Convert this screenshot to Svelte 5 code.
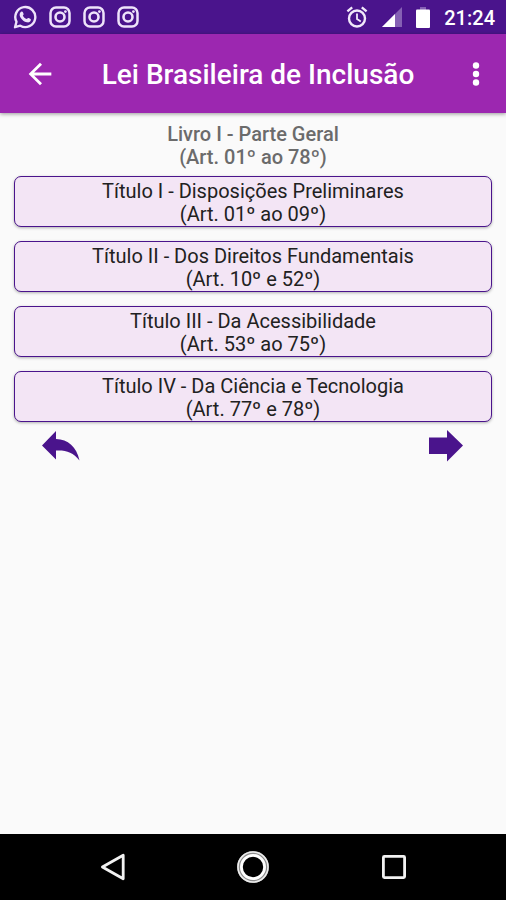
<script lang="ts">
	interface Title {
		name: string;
		articles: string;
	}

	let titles: Title[] = [
		{ name: "Título I - Disposições Preliminares", articles: "(Art. 01º ao 09º)" },
		{ name: "Título II - Dos Direitos Fundamentais", articles: "(Art. 10º e 52º)" },
		{ name: "Título III - Da Acessibilidade", articles: "(Art. 53º ao 75º)" },
		{ name: "Título IV - Da Ciência e Tecnologia", articles: "(Art. 77º e 78º)" }
	];

	let notifications: number[] = [1, 2, 3];
</script>

<div class="screen">
	<div class="status-bar">
		<div class="status-left">
			<svg width="24" height="24" viewBox="0 0 24 24" fill="none">
				<path d="M2 22.2 L3.5 16.8 A10 10 0 1 1 7.3 20.7 Z" stroke="#eee3fa" stroke-width="2.4" stroke-linejoin="round" />
				<path d="M8.6 6.6 C9.4 6.2 9.8 6.8 10.6 9 C10.8 9.7 10.2 10.1 9.8 10.6 C10.7 12.3 11.9 13.4 13.8 14.1 C14.4 13.6 14.8 12.7 15.5 13 C17.6 14 18 14.2 17.9 14.8 C17.6 17 15.7 17.7 14 17.3 C10.4 16.4 7.5 13.5 6.7 10.4 C6.4 8.8 7.3 7.2 8.6 6.6 Z" fill="#eee3fa" />
			</svg>
			{#each notifications as notification (notification)}
				<svg width="22" height="22" viewBox="0 0 22 22" fill="none" stroke="#eee3fa">
					<rect x="1.5" y="1.5" width="19" height="19" rx="5.5" stroke-width="2.5" />
					<circle cx="11" cy="11" r="4.5" stroke-width="2.6" />
					<circle cx="16.4" cy="5.6" r="1.4" fill="#eee3fa" stroke="none" />
				</svg>
			{/each}
		</div>
		<div class="status-right">
			<svg width="22" height="22" viewBox="0 0 22 22" fill="none" stroke="#f1e9fa" stroke-width="2.4">
				<circle cx="11" cy="12.5" r="8" />
				<path d="M1.4 5.4 L6.2 1.4 M20.6 5.4 L15.8 1.4" />
				<path d="M11 7.5 V13 L14.8 15.4" stroke-width="1.8" />
			</svg>
			<svg width="20" height="20" viewBox="0 0 20 20">
				<path d="M0 20 L20 0 V20 Z" fill="#8560b4" />
				<path d="M0 20 L13 7 V20 Z" fill="#fff" />
			</svg>
			<svg width="14" height="21" viewBox="0 0 14 21">
				<path d="M4 0 H10 V3 H4 Z" fill="#8560b4" />
				<rect y="2.5" width="14" height="18.5" rx="1" fill="#fff" />
			</svg>
			<span class="clock">21:24</span>
		</div>
	</div>

	<header class="app-bar">
		<button class="icon-button" aria-label="Voltar">
			<svg width="34" height="34" viewBox="0 0 24 24" fill="#fff">
				<path d="M20 11H7.83l5.59-5.59L12 4l-8 8 8 8 1.41-1.41L7.83 13H20v-2z" />
			</svg>
		</button>
		<h1>Lei Brasileira de Inclusão</h1>
		<button class="icon-button" aria-label="Mais opções">
			<svg width="34" height="34" viewBox="0 0 34 34" fill="#fff">
				<circle cx="17" cy="8.5" r="3.2" />
				<circle cx="17" cy="17" r="3.2" />
				<circle cx="17" cy="25.5" r="3.2" />
			</svg>
		</button>
	</header>

	<main>
		<h2>Livro I - Parte Geral<br />(Art. 01º ao 78º)</h2>
		<div class="titles">
			{#each titles as title}
				<button class="title-button">{title.name}<br />{title.articles}</button>
			{/each}
		</div>
		<div class="pager">
			<button aria-label="Página anterior">
				<svg width="38" height="32" viewBox="0 0 38 32" fill="#4a148c">
					<path d="M0 15.5 L14 1 V9 C26 9.5 34.5 16.5 37.5 30.5 C31 22 24 20 14 20.5 V29.5 Z" />
				</svg>
			</button>
			<button aria-label="Próxima página">
				<svg width="34" height="32" viewBox="0 0 34 32" fill="#4a148c">
					<path d="M0 7.5 H18 V0 L34 15.5 L18 31.5 V24 H0 Z" />
				</svg>
			</button>
		</div>
	</main>

	<nav class="nav-bar">
		<button aria-label="Voltar">
			<svg width="28" height="32" viewBox="0 0 28 32" fill="none" stroke="#f2f2f2" stroke-width="2.8" stroke-linejoin="round">
				<path d="M4.4 16 L25.2 4.2 V27.8 Z" />
			</svg>
		</button>
		<button aria-label="Início">
			<svg width="34" height="34" viewBox="0 0 34 34" fill="none">
				<circle cx="17" cy="17" r="13.4" stroke="#8c8c8c" stroke-width="5.2" />
				<circle cx="17" cy="17" r="15" stroke="#ededed" stroke-width="1.6" />
				<circle cx="17" cy="17" r="11.6" stroke="#fff" stroke-width="2.8" />
			</svg>
		</button>
		<button aria-label="Recentes">
			<svg width="28" height="28" viewBox="0 0 28 28" fill="none" stroke="#f2f2f2" stroke-width="2.8">
				<rect x="3.4" y="3.4" width="21.2" height="21.2" rx="1" />
			</svg>
		</button>
	</nav>
</div>

<style>
	:global(body) {
		margin: 0;
		background-color: #fafafa;
	}

	.screen {
		min-height: 100vh;
		display: flex;
		flex-direction: column;
		font-family: Roboto, "Liberation Sans", sans-serif;
	}

	button {
		border: none;
		background: none;
		padding: 0;
		margin: 0;
		font-family: inherit;
		cursor: pointer;
	}

	svg {
		display: block;
		flex: none;
	}

	.status-bar {
		height: 34px;
		padding: 0 11px 0 13px;
		display: flex;
		align-items: center;
		justify-content: space-between;
		background-color: #4a148c;
	}

	.status-left,
	.status-right {
		display: flex;
		align-items: center;
	}

	.status-left {
		gap: 12px;
	}

	.status-right {
		gap: 14px;
	}

	.clock {
		color: #fff;
		font-size: 20px;
		font-weight: 500;
		line-height: 24px;
		padding-top: 1px;
	}

	.app-bar {
		height: 79px;
		padding: 0 13px 0 23px;
		display: flex;
		align-items: center;
		background-color: #9c27b0;
		box-shadow: 0 1px 4px rgba(0, 0, 0, 0.4);
	}

	h1 {
		flex: 1;
		margin: 0;
		padding-top: 2px;
		color: #fff;
		font-size: 28px;
		font-weight: 500;
		line-height: 32px;
		text-align: center;
	}

	main {
		flex: 1;
		padding: 10px 14px;
	}

	h2 {
		margin: 0;
		color: #6b6b6b;
		font-size: 20px;
		font-weight: 500;
		line-height: 23px;
		text-align: center;
	}

	.titles {
		margin-top: 7px;
		display: flex;
		flex-direction: column;
		gap: 14px;
	}

	.title-button {
		padding: 3px 8px 0;
		border: 1px solid #4a148c;
		border-radius: 7px;
		background-color: #f3e5f5;
		box-shadow: 0 1px 3px rgba(0, 0, 0, 0.3);
		color: #212121;
		font-size: 20px;
		line-height: 23px;
	}

	.pager {
		margin-top: 8px;
		padding: 0 29px 0 28px;
		display: flex;
		justify-content: space-between;
	}

	.nav-bar {
		height: 66px;
		display: flex;
		align-items: center;
		justify-content: center;
		gap: 110px;
		background-color: #000;
	}
</style>
